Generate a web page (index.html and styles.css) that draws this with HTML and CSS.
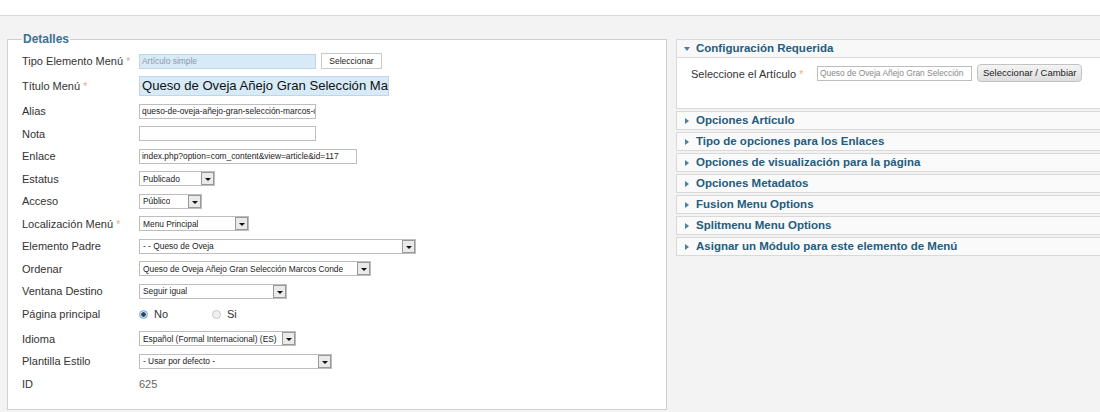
FILE: index.html
```html
<!DOCTYPE html>
<html lang="es">
    <head>
        <meta charset="UTF-8">
        <link rel="stylesheet" href="styles.css">
    </head>
    <body>
        <div class="top-bar"></div>
        <div class="main">
            <fieldset class="details">
                <legend>Detalles</legend>
                <div class="row">
                    <label>Tipo Elemento Menú <span class="star">*</span></label>
                    <div class="field blue small w176">Artículo simple</div>
                    <div class="btn-plain">Seleccionar</div>
                </div>
                <div class="row tall">
                    <label>Título Menú <span class="star">*</span></label>
                    <div class="field blue big w249">Queso de Oveja Añejo Gran Selección Marcos Conde</div>
                </div>
                <div class="row">
                    <label>Alias</label>
                    <div class="field w176">queso-de-oveja-añejo-gran-selección-marcos-conde</div>
                </div>
                <div class="row">
                    <label>Nota</label>
                    <div class="field w176"></div>
                </div>
                <div class="row">
                    <label>Enlace</label>
                    <div class="field w217">index.php?option=com_content&amp;view=article&amp;id=117</div>
                </div>
                <div class="row">
                    <label>Estatus</label>
                    <div class="select w76"><span>Publicado</span><i class="arrow"></i></div>
                </div>
                <div class="row">
                    <label>Acceso</label>
                    <div class="select w63"><span>Público</span><i class="arrow"></i></div>
                </div>
                <div class="row">
                    <label>Localización Menú <span class="star">*</span></label>
                    <div class="select w109"><span>Menu Principal</span><i class="arrow"></i></div>
                </div>
                <div class="row">
                    <label>Elemento Padre</label>
                    <div class="select w276"><span>- - Queso de Oveja</span><i class="arrow"></i></div>
                </div>
                <div class="row">
                    <label>Ordenar</label>
                    <div class="select w231"><span>Queso de Oveja Añejo Gran Selección Marcos Conde</span><i class="arrow"></i></div>
                </div>
                <div class="row">
                    <label>Ventana Destino</label>
                    <div class="select w147"><span>Seguir igual</span><i class="arrow"></i></div>
                </div>
                <div class="row radios">
                    <label>Página principal</label>
                    <span class="radio on"></span><span class="radio-label">No</span>
                    <span class="radio"></span><span class="radio-label">Si</span>
                </div>
                <div class="row">
                    <label>Idioma</label>
                    <div class="select w156"><span>Español (Formal Internacional) (ES)</span><i class="arrow"></i></div>
                </div>
                <div class="row">
                    <label>Plantilla Estilo</label>
                    <div class="select w192"><span>- Usar por defecto -</span><i class="arrow"></i></div>
                </div>
                <div class="row">
                    <label>ID</label>
                    <span class="id-value">625</span>
                </div>
            </fieldset>

            <div class="side">
                <div class="panel open">
                    <div class="panel-head"><i class="tri down"></i>Configuración Requerida</div>
                    <div class="panel-body">
                        <label>Seleccione el Artículo <span class="star">*</span></label>
                        <div class="field gray-text w155">Queso de Oveja Añejo Gran Selección</div>
                        <div class="btn-round">Seleccionar / Cambiar</div>
                    </div>
                </div>
                <div class="panel"><div class="panel-head"><i class="tri"></i>Opciones Artículo</div></div>
                <div class="panel"><div class="panel-head"><i class="tri"></i>Tipo de opciones para los Enlaces</div></div>
                <div class="panel"><div class="panel-head"><i class="tri"></i>Opciones de visualización para la página</div></div>
                <div class="panel"><div class="panel-head"><i class="tri"></i>Opciones Metadatos</div></div>
                <div class="panel"><div class="panel-head"><i class="tri"></i>Fusion Menu Options</div></div>
                <div class="panel"><div class="panel-head"><i class="tri"></i>Splitmenu Menu Options</div></div>
                <div class="panel"><div class="panel-head"><i class="tri"></i>Asignar un Módulo para este elemento de Menú</div></div>
            </div>
        </div>
    </body>
</html>
```

FILE: styles.css
```css
html, body {
    margin: 0;
    padding: 0;
}

body {
    background-color: #f3f3f3;
    font-family: "Liberation Sans", Arial, sans-serif;
    color: #333;
    width: 1100px;
    height: 412px;
    overflow: hidden;
}

.top-bar {
    height: 15px;
    background-color: #fff;
    border-bottom: 1px solid #d9d9d9;
}

.main {
    display: flex;
    align-items: flex-start;
    padding: 16px 0 0 7px;
    gap: 9px;
}

/* left form */
.details {
    width: 637px;
    height: 372px;
    margin: 0;
    padding: 4px 7px 0 14px;
    border: 1px solid #cfcfcf;
    background-color: #fff;
    flex-shrink: 0;
}

.details legend {
    font-size: 12px;
    font-weight: bold;
    color: #3a7196;
    padding: 0 1px;
    line-height: 14px;
}

.row {
    display: flex;
    align-items: center;
    height: 22.5px;
}

.row.tall {
    height: 27.5px;
}

.row.radios {
    height: 25px;
    padding-bottom: 2px;
    box-sizing: border-box;
}

.row label {
    width: 117px;
    font-size: 11px;
    flex-shrink: 0;
}

.star {
    color: #e8a87a;
    font-size: 10px;
}

.field {
    box-sizing: border-box;
    height: 15px;
    border: 1px solid #bdbdbd;
    background-color: #fff;
    font-size: 8.4px;
    line-height: 13px;
    padding: 0 2px;
    white-space: nowrap;
    overflow: hidden;
    color: #222;
}

.field.blue {
    background-color: #d7eaf8;
    border-color: #c4d4e0;
}

.field.small {
    color: #8c9aa6;
}

.field.big {
    height: 20px;
    font-size: 13.1px;
    line-height: 18px;
    color: #111;
}

.field.gray-text {
    color: #888;
}

.w155 { width: 155px; }
.w176 { width: 177px; }
.w217 { width: 218px; }
.w249 { width: 250px; }

.btn-plain {
    margin-left: 5px;
    height: 14px;
    width: 59px;
    border: 1px solid #c9c9c9;
    font-size: 8.5px;
    line-height: 14px;
    text-align: center;
    color: #222;
    background-color: #fff;
}

.select {
    box-sizing: border-box;
    height: 15px;
    border: 1px solid #bdbdbd;
    display: flex;
    align-items: center;
    justify-content: space-between;
    font-size: 8.4px;
    padding-left: 3px;
    color: #222;
    white-space: nowrap;
}

.select span {
    overflow: hidden;
}

.arrow {
    box-sizing: border-box;
    width: 13px;
    height: 13px;
    margin-left: 2px;
    border: 1px solid #999;
    background-color: #eaeaea;
    position: relative;
    flex-shrink: 0;
}

.arrow:after {
    content: "";
    position: absolute;
    left: 3px;
    top: 5px;
    border-left: 3px solid transparent;
    border-right: 3px solid transparent;
    border-top: 3px solid #111;
}

.w63 { width: 63px; }
.w76 { width: 76px; }
.w109 { width: 110px; }
.w147 { width: 148px; }
.w156 { width: 157px; }
.w192 { width: 193px; }
.w231 { width: 232px; }
.w276 { width: 277px; }

.radio {
    box-sizing: border-box;
    width: 9px;
    height: 9px;
    border-radius: 50%;
    border: 1px solid #c6c6c6;
    background-color: #f0f0f0;
}

.radio.on {
    border-color: #8aa6bf;
    background: radial-gradient(circle, #234a6a 0 2px, #cfe0ee 2.5px);
}

.radio-label {
    font-size: 11px;
    margin-left: 6px;
    width: 58px;
}

.id-value {
    font-size: 11px;
    color: #666;
}

/* right side */
.side {
    margin-top: 7px;
    width: 440px;
    flex-shrink: 0;
}

.panel {
    border: 1px solid #d9d9d9;
    background-color: #fafafa;
    margin-bottom: 2px;
}

.panel-head {
    height: 17px;
    line-height: 17px;
    font-size: 11.5px;
    font-weight: bold;
    color: #235c7e;
    display: flex;
    align-items: center;
}

.panel.open .panel-head {
    border-bottom: 1px solid #d9d9d9;
    background-color: #f8f8f8;
}

.tri {
    width: 0;
    height: 0;
    margin: 0 7px 0 8px;
    border-top: 3px solid transparent;
    border-bottom: 3px solid transparent;
    border-left: 4px solid #4e7f98;
}

.tri.down {
    margin: 0 6px 0 7px;
    border-left: 3px solid transparent;
    border-right: 3px solid transparent;
    border-top: 4px solid #4e7f98;
    border-bottom: 0;
}

.panel-body {
    height: 50px;
    background-color: #fff;
    display: flex;
    align-items: flex-start;
    padding: 6px 0 0 14px;
    box-sizing: border-box;
}

.panel-body label {
    width: 126px;
    font-size: 11px;
    margin-top: 4px;
}

.panel-body .field {
    margin-top: 2px;
}

.btn-round {
    margin-left: 5px;
    height: 16px;
    padding: 0 5px;
    border: 1px solid #c2c2c2;
    border-radius: 4px;
    background: linear-gradient(#f4f4f4, #dedede);
    font-size: 9.5px;
    line-height: 16px;
    color: #222;
}
```
